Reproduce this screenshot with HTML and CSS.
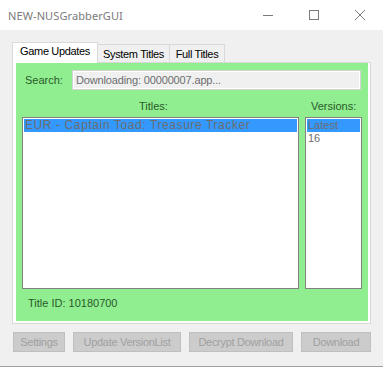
FILE: index.html
```html
<!DOCTYPE html>
<html>
<head>
  <title>NEW-NUSGrabberGUI</title>
  <link rel="stylesheet" href="styles.css">
</head>
<body>
  <div class="titlebar">
    <span class="title">NEW-NUSGrabberGUI</span>
    <div class="controls">
      <div class="ctl">
        <svg width="10" height="10" viewBox="0 0 10 10"><path d="M0 5.5H10" stroke="#111" stroke-width="1"/></svg>
      </div>
      <div class="ctl">
        <svg width="10" height="10" viewBox="0 0 10 10"><rect x="0.5" y="0.5" width="9" height="9" fill="none" stroke="#111" stroke-width="1"/></svg>
      </div>
      <div class="ctl">
        <svg width="10" height="10" viewBox="0 0 10 10"><path d="M0 0L10 10M10 0L0 10" stroke="#111" stroke-width="1"/></svg>
      </div>
    </div>
  </div>

  <div class="window">
    <div class="tabs">
      <div class="tab active">Game Updates</div>
      <div class="tab">System Titles</div>
      <div class="tab">Full Titles</div>
    </div>

    <div class="page">
      <div class="green">
        <div class="searchRow">
          <span class="lbl">Search:</span>
          <div class="searchBox">Downloading: 00000007.app...</div>
        </div>

        <div class="lists">
          <div class="lbl titlesLbl">Titles:</div>
          <div class="lbl versionsLbl">Versions:</div>
          <div class="listbox">
            <div class="item sel wide">EUR - Captain Toad: Treasure Tracker</div>
          </div>
          <div class="listbox">
            <div class="item sel">Latest</div>
            <div class="item">16</div>
          </div>
        </div>

        <div class="lbl titleId">Title ID: 10180700</div>
      </div>
    </div>

    <div class="buttons">
      <button class="btn w-settings">Settings</button>
      <button class="btn w-update">Update VersionList</button>
      <button class="btn w-decrypt">Decrypt Download</button>
      <button class="btn w-download">Download</button>
    </div>
  </div>
  <div class="below"></div>
</body>
</html>
```

FILE: styles.css
```css
body {
  margin: 0;
  width: 383px;
  height: 369px;
  overflow: hidden;
  background-color: #ffffff;
  font-family: "Liberation Sans", Arial, sans-serif;
  font-size: 11px;
}

.titlebar {
  height: 30px;
  display: flex;
  align-items: center;
  background-color: #ffffff;
  padding-left: 8px;
}

.title {
  font-family: "Noto Sans", "Open Sans", sans-serif;
  font-size: 11px;
  letter-spacing: 0.1px;
  color: #7a7a7a;
}

.controls {
  margin-left: auto;
  display: flex;
}

.ctl {
  width: 46px;
  height: 30px;
  display: flex;
  align-items: center;
  justify-content: center;
  opacity: 0.55;
}

.window {
  background-color: #f0f0f0;
  height: 324px;
  padding: 12px 0 0 12px;
  border-bottom: 1px solid #a0a0a0;
}

.tabs {
  display: flex;
  align-items: flex-end;
  height: 20px;
}

.tab {
  height: 18px;
  box-sizing: border-box;
  border: 1px solid #d9d9d9;
  border-bottom: none;
  border-left: none;
  background-color: #f0f0f0;
  color: #000;
  display: flex;
  justify-content: center;
  padding-top: 3px;
  width: 72px;
  letter-spacing: -0.35px;
}

.tab:nth-child(3) {
  width: 55px;
}

.tab.active {
  height: 21px;
  width: 86px;
  border-left: 1px solid #d9d9d9;
  background-color: #ffffff;
  padding-top: 2px;
  margin-bottom: -1px;
  position: relative;
  z-index: 1;
}

.page {
  width: 359px;
  box-sizing: border-box;
  border: 1px solid #d9d9d9;
  background-color: #ffffff;
  padding: 0 2px 2px 3px;
}

.green {
  height: 258px;
  background-color: #90ee90;
  padding-top: 7px;
  box-sizing: border-box;
}

.lbl {
  color: #2a5a2a;
}

.searchRow {
  display: flex;
  align-items: center;
  height: 20px;
  padding-left: 9px;
}

.searchRow .lbl {
  width: 47px;
}

.searchBox {
  width: 289px;
  height: 20px;
  box-sizing: border-box;
  border: 1px solid #d3d3d3;
  box-shadow: inset 0 0 0 1px #ffffff;
  background-color: #f0f0f0;
  color: #6d6d6d;
  padding: 3px 0 0 3px;
  letter-spacing: -0.15px;
}

.lists {
  display: grid;
  grid-template-columns: 277px 57px;
  grid-template-rows: 13px 172px;
  column-gap: 6px;
  row-gap: 4px;
  margin: 10px 0 0 6px;
  line-height: 13px;
}

.titlesLbl {
  padding-left: 117px;
}

.versionsLbl {
  padding-left: 6px;
}

.listbox {
  border: 1px solid #828282;
  background-color: #ffffff;
  padding: 1px;
}

.item {
  height: 13px;
  line-height: 13px;
  padding-left: 1px;
  color: #6d6d6d;
  white-space: nowrap;
  overflow: hidden;
}

.item.wide {
  font-size: 12px;
  letter-spacing: 0.6px;
}

.item.sel {
  background-color: #3399ff;
}

.titleId {
  margin: 8px 0 0 12px;
  line-height: 13px;
}

.buttons {
  display: flex;
  gap: 8px;
  margin-top: 8px;
  padding-left: 1px;
}

.btn {
  height: 20px;
  box-sizing: border-box;
  border: 1px solid #bfbfbf;
  background-color: #cccccc;
  color: #a0a0a0;
  font-family: "Liberation Sans", Arial, sans-serif;
  font-size: 11px;
  letter-spacing: -0.3px;
  padding: 0;
}

.w-settings { width: 52px; }
.w-update { width: 108px; }
.w-decrypt { width: 104px; }
.w-download { width: 70px; }

.below {
  height: 2px;
  background-color: #ffffff;
}
```
